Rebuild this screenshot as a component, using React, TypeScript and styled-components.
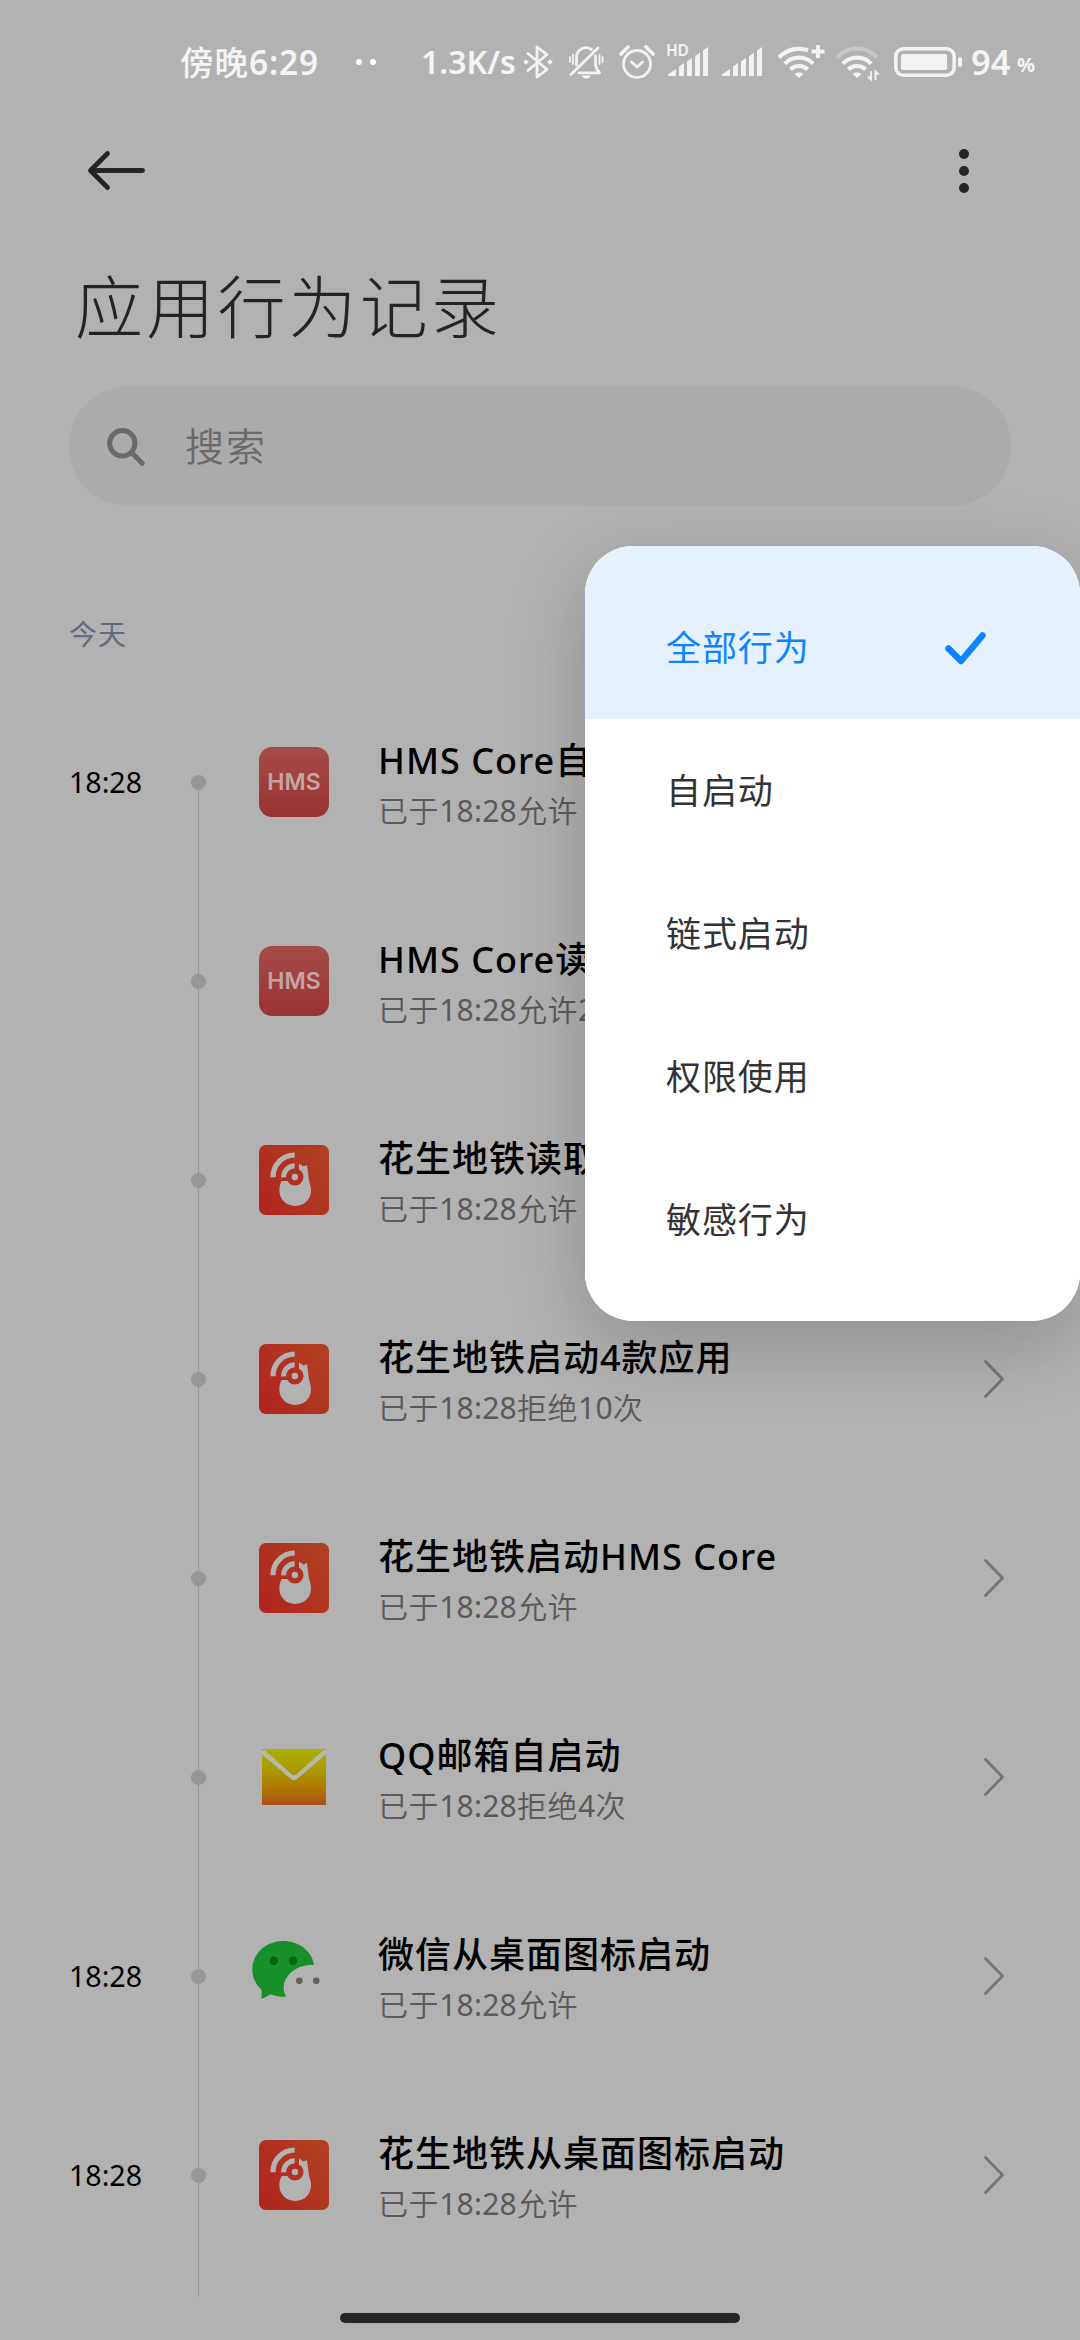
import React from "react";
import styled, { createGlobalStyle } from "styled-components";

const Global = createGlobalStyle`
  *, *::before, *::after { box-sizing: border-box; }
  body {
    margin: 0;
    background: #b2b2b2;
    font-family: "Noto Sans", "Noto Sans CJK SC", sans-serif;
  }
  svg { display: block; flex: none; overflow: visible; }
`;

const Screen = styled.main`
  position: relative;
  width: 1080px;
  height: 2340px;
  overflow: hidden;
  background: #b2b2b2;
  display: flex;
  flex-direction: column;
`;

const StatusBar = styled.div`
  height: 100px;
  padding: 24px 0 0 180px;
  display: flex;
  align-items: center;
  flex: none;
  color: #f4f4f4;
`;

const StatusText = styled.span<{ $w: number; $size: number; $gap?: number; $track?: number; $drop?: number; $weight?: number }>`
  width: ${(p) => p.$w}px;
  margin-right: ${(p) => p.$gap ?? 0}px;
  padding-top: ${(p) => p.$drop ?? 0}px;
  font-size: ${(p) => p.$size}px;
  line-height: 40px;
  letter-spacing: ${(p) => p.$track ?? 0}px;
  font-weight: ${(p) => p.$weight ?? 600};
  white-space: nowrap;
`;

const Digits = styled.span<{ $weight: number; $track: number }>`
  font-weight: ${(p) => p.$weight};
  letter-spacing: ${(p) => p.$track}px;
`;

const NoticeDots = styled.div`
  display: flex;
  gap: 8px;
  width: 67px;
  margin-right: -2px;
  &::before, &::after {
    content: "";
    width: 6px;
    height: 6px;
    border-radius: 50%;
    background: #fff;
  }
`;

const Toolbar = styled.header`
  height: 141px;
  padding: 0 111px 0 88px;
  display: flex;
  align-items: center;
  justify-content: space-between;
  flex: none;
`;

const PlainButton = styled.button`
  border: 0;
  padding: 0;
  background: none;
  color: #242424;
`;

const PageTitle = styled.h1`
  margin: 0;
  height: 145px;
  padding: 16px 0 0 75px;
  font-size: 68px;
  line-height: 100px;
  letter-spacing: 3.2px;
  font-weight: 300;
  color: #242424;
  flex: none;
`;

const SearchBox = styled.div`
  height: 120px;
  margin: 0 69px;
  padding: 1px 38px 0;
  border-radius: 60px;
  background: #ababab;
  display: flex;
  align-items: center;
  gap: 40px;
  flex: none;
  color: #6a6a6a;
`;

const SearchHint = styled.span`
  padding-bottom: 5px;
  font-size: 39px;
  letter-spacing: 2px;
  font-weight: 350;
`;

const DayLabel = styled.h2`
  margin: 0;
  height: 177px;
  padding: 108px 0 0 69px;
  font-size: 28px;
  line-height: 40px;
  letter-spacing: 1px;
  font-weight: 400;
  color: #646b80;
  flex: none;
`;

const List = styled.ul`
  list-style: none;
  margin: 0;
  padding: 0;
  flex: none;
`;

const Row = styled.li`
  height: 199px;
  padding: 0 76px 1px 69px;
  display: flex;
  align-items: center;
`;

const Time = styled.time`
  width: 122px;
  font-size: 28.6px;
  line-height: 40px;
  color: #000;
`;

const Rail = styled.div`
  align-self: flex-start;
  width: 15px;
  height: 199px;
  margin-right: 53px;
  display: flex;
  flex-direction: column;
  align-items: center;
  flex: none;
`;

const RailLine = styled.i<{ $hidden?: boolean }>`
  width: 1px;
  flex: 1;
  background: ${(p) => (p.$hidden ? "transparent" : "#979797")};
`;

const RailDot = styled.i`
  width: 15px;
  height: 15px;
  border-radius: 50%;
  background: #979797;
`;

const RailEnd = styled.div`
  width: 1px;
  height: 22px;
  margin-left: 198px;
  background: #979797;
  flex: none;
`;

const Texts = styled.div`
  flex: 1;
  min-width: 0;
  margin-left: 49px;
  padding-top: 8px;
  display: flex;
  flex-direction: column;
  white-space: nowrap;
`;

const RowTitle = styled.div`
  font-size: 36px;
  line-height: 50px;
  letter-spacing: 1px;
  font-weight: 500;
  color: #000;
`;

const RowNote = styled.div`
  font-size: 30px;
  line-height: 50px;
  letter-spacing: 0.6px;
  font-weight: 350;
  color: #5a5a5a;
`;

const HmsTile = styled.div`
  width: 70px;
  height: 70px;
  border-radius: 13px;
  background: linear-gradient(#a64c48, #983332);
  display: flex;
  align-items: center;
  justify-content: center;
  flex: none;
  font-family: Inter, "Noto Sans", sans-serif;
  font-size: 23px;
  font-weight: 600;
  color: #c3a5a4;
`;

const HomeBar = styled.div`
  width: 400px;
  height: 10px;
  margin: 16px auto 0;
  border-radius: 5px;
  background: #242424;
  flex: none;
`;

const Menu = styled.div`
  position: absolute;
  top: 546px;
  right: 0;
  width: 495px;
  padding: 0 0 30px;
  border-radius: 48px;
  overflow: hidden;
  background: #fff;
`;

const MenuShadow = styled.div`
  position: absolute;
  top: 546px;
  right: 0;
  width: 495px;
  height: 775px;
  border-radius: 48px;
  box-shadow: 0 24px 80px rgba(0, 0, 0, 0.2);
`;

const MenuItem = styled.div<{ $active?: boolean }>`
  height: ${(p) => (p.$active ? 173 : 143)}px;
  padding: ${(p) => (p.$active ? 31 : 1)}px 94px 0 81px;
  display: flex;
  align-items: center;
  justify-content: space-between;
  font-size: 35px;
  line-height: 50px;
  letter-spacing: 0.9px;
  font-weight: 400;
  color: ${(p) => (p.$active ? "#0d84ff" : "#333")};
  background: ${(p) => (p.$active ? "#e5f1ff" : "#fff")};
`;

const SubwayIcon = () => (
  <svg width="70" height="70" viewBox="0 0 70 70">
    <defs>
      <linearGradient id="subway" x1="0" y1="0.75" x2="1" y2="0.1">
        <stop offset="0" stopColor="#b0261f" />
        <stop offset="1" stopColor="#b04122" />
      </linearGradient>
    </defs>
    <rect width="70" height="70" rx="7" fill="url(#subway)" />
    <g fill="none" stroke="#b2b2b2" strokeWidth="5.2">
      <path d="M14 32.3A21.8 21.8 0 0 1 35.7 10" />
      <path d="M24.8 32.3A11 11 0 0 1 35.7 20.8" />
    </g>
    <path
      d="M22.6 36C21 39 20.4 42 20.4 45.6C20.4 54.6 27.2 61 36.2 61C45.2 61 52 54.6 52 45.6C52 40 50 38 49.4 31C49 27 48.4 24 48 20L44.600 21.500L40 18.500V36Z"
      fill="#b2b2b2"
    />
    <circle cx="35.900" cy="32" r="8.600" fill="#b03120" />
    <circle cx="35.900" cy="32" r="3.200" fill="#b2b2b2" />
  </svg>
);

const MailIcon = () => (
  <svg width="70" height="70" viewBox="0 0 70 70">
    <defs>
      <linearGradient id="mail" x1="0" y1="0" x2="0" y2="1">
        <stop offset="0" stopColor="#a9b000" />
        <stop offset="0.35" stopColor="#ab9b00" />
        <stop offset="0.7" stopColor="#ae7802" />
        <stop offset="1" stopColor="#b04f14" />
      </linearGradient>
    </defs>
    <rect x="3" y="7" width="64" height="56" fill="url(#mail)" />
    <path d="M3 8.700L3 12.500L32 37Q35 39.300 38 37L67 12.500V8.700L64.500 8L37 32.500Q35 34 33 32.500L5.500 8Z" fill="#b9b8a6" />
  </svg>
);

const WechatIcon = () => (
  <svg width="70" height="70" viewBox="0 0 70 70">
    <path
      d="M2.700 49C-3 44 -6.700 37 -6.700 28.500C-6.700 12.500 7 0 24 0C40 0 53 10 55 24C38 23 24.700 34 24.700 47C24.700 50 25.500 53 27 55.600C21 56.500 16 55 11.500 53.300L3.500 57.700C2.600 58 2.500 57.500 2.500 56.500Z"
      fill="#17902a"
    />
    <circle cx="14.800" cy="19.700" r="4.300" fill="#07640f" />
    <circle cx="34" cy="19.700" r="4.300" fill="#07640f" />
    <circle cx="40.300" cy="39.800" r="3.300" fill="#5f6157" />
    <circle cx="57.200" cy="39.800" r="3.300" fill="#5f6157" />
  </svg>
);

const Chevron = () => (
  <svg width="20" height="38" viewBox="0 0 20 38" fill="none" stroke="#757575" strokeWidth="2.800" strokeLinecap="round" strokeLinejoin="round">
    <path d="M1.500 1.500L18.500 19L1.500 36.500" />
  </svg>
);

const Bars = () => (
  <g fill="#f2f2f2">
    <path d="M0 30V28.500L8 23V30Z" />
    <path d="M11 30V20.500L16 17V30Z" />
    <path d="M19 30V15.500L24 12V30Z" />
    <path d="M27 30V10.500L32 6.500V30Z" />
    <path d="M35 30V4.500L40 1V30Z" />
  </g>
);

const SignalHdText = styled.span`
  position: absolute;
  left: -2px;
  top: -5px;
  font-size: 15.5px;
  line-height: 18px;
  font-weight: 600;
  letter-spacing: -0.3px;
`;

const StatusSlot = styled.div<{ $gap: number }>`
  position: relative;
  margin-right: ${(p) => p.$gap}px;
`;

const WifiLower = () => (
  <>
    <path d="M6.800 17.800A19.500 19.500 0 0 1 35.200 17.800" />
    <path d="M12.300 23.500A12.500 12.500 0 0 1 29.700 23.500" />
    <path d="M21 32L16.500 28A6.500 6.500 0 0 1 25.500 28Z" fill="#f2f2f2" stroke="none" />
  </>
);

type App = "hms" | "subway" | "mail" | "wechat";

const icons: Record<App, React.ReactNode> = {
  hms: <HmsTile>HMS</HmsTile>,
  subway: <SubwayIcon />,
  mail: <MailIcon />,
  wechat: <WechatIcon />,
};

const records: { time?: string; app: App; title: string; note: string }[] = [
  { time: "18:28", app: "hms", title: "HMS Core自启动", note: "已于18:28允许" },
  { app: "hms", title: "HMS Core读取", note: "已于18:28允许2次" },
  { app: "subway", title: "花生地铁读取", note: "已于18:28允许" },
  { app: "subway", title: "花生地铁启动4款应用", note: "已于18:28拒绝10次" },
  { app: "subway", title: "花生地铁启动HMS Core", note: "已于18:28允许" },
  { app: "mail", title: "QQ邮箱自启动", note: "已于18:28拒绝4次" },
  { time: "18:28", app: "wechat", title: "微信从桌面图标启动", note: "已于18:28允许" },
  { time: "18:28", app: "subway", title: "花生地铁从桌面图标启动", note: "已于18:28允许" },
];

const filters = ["全部行为", "自启动", "链式启动", "权限使用", "敏感行为"];

// Splits a note so that its numbers can carry their own weight.
const noteParts = (note: string) =>
  note.split(/([\d:]+)/).map((part, i) =>
    i % 2 ? (
      <Digits key={i} $weight={400} $track={0.2}>
        {part}
      </Digits>
    ) : (
      part
    )
  );

export default function App() {
  return (
    <Screen lang="zh-CN">
      <Global />
      <StatusBar>
        <StatusText $w={142} $size={33.5} $gap={34} $track={1} $weight={500}>
          傍晚<Digits $weight={600} $track={0.8}>6:29</Digits>
        </StatusText>
        <NoticeDots />
        <StatusText $w={92} $size={32} $gap={10}>1.3K/s</StatusText>
        <StatusSlot $gap={16}>
          <svg width="30" height="34" viewBox="0 0 30 34" fill="none" stroke="#f2f2f2" strokeWidth="2.800" strokeLinejoin="round" strokeLinecap="round">
            <path d="M5 8.500L24 24.500L14 32V2L24 9.500L5 25.500" />
            <path d="M3 14.200L5.800 17L3 19.800L0.200 17ZM27 14.200L29.800 17L27 19.800L24.200 17Z" fill="#f2f2f2" stroke="none" />
          </svg>
        </StatusSlot>
        <StatusSlot $gap={16}>
          <svg width="34" height="34" viewBox="0 0 34 34" fill="none" stroke="#f2f2f2" strokeWidth="2.800" strokeLinecap="round" strokeLinejoin="round">
            <path d="M2 29.500L29 3" />
            <path d="M7.500 20V12A9.500 9.500 0 0 1 22.500 4.500" />
            <path d="M26.500 11V20Q27 24 30.500 27.800H10" />
            <path d="M12.500 30.500H22Q20.500 33.500 17.200 33.500Q14 33.500 12.500 30.500Z" fill="#f2f2f2" stroke="none" />
            <path d="M1 12V17M4 10V19M30.500 10V19M33.500 12V17" strokeWidth="1.800" />
          </svg>
        </StatusSlot>
        <StatusSlot $gap={13}>
          <svg width="36" height="36" viewBox="0 0 36 36" fill="none" stroke="#f2f2f2" strokeWidth="2.800" strokeLinecap="round" strokeLinejoin="round">
            <circle cx="18" cy="20" r="13.500" />
            <path d="M12.500 18L18 23L23.500 18" />
            <path d="M2 10L9 3M34 10L27 3" strokeWidth="3.800" />
          </svg>
        </StatusSlot>
        <StatusSlot $gap={14}>
          <SignalHdText>HD</SignalHdText>
          <svg width="40" height="32" viewBox="0 0 40 32"><Bars /></svg>
        </StatusSlot>
        <StatusSlot $gap={16}>
          <svg width="40" height="32" viewBox="0 0 40 32"><Bars /></svg>
        </StatusSlot>
        <StatusSlot $gap={15}>
          <svg width="43" height="32" viewBox="0 0 43 32" fill="none" stroke="#f2f2f2" strokeWidth="4.200">
            <path d="M1 11.500A28 28 0 0 1 30 4.200" />
            <WifiLower />
            <path d="M40 -1V12M33.500 5.500H46.500" strokeWidth="4" />
          </svg>
        </StatusSlot>
        <StatusSlot $gap={15}>
          <svg width="43" height="32" viewBox="0 0 43 32" fill="none" stroke="#f2f2f2" strokeWidth="4.200">
            <path d="M1 11.500A27 27 0 0 1 41 11.500" stroke="#c6c6c6" />
            <WifiLower />
            <path d="M35 25V33.500L32 30.500M39.500 34V25.500L42.500 28.500" strokeWidth="1.900" />
          </svg>
        </StatusSlot>
        <StatusSlot $gap={9}>
          <svg width="68" height="30" viewBox="0 0 68 30">
            <rect x="1.800" y="1.800" width="58.400" height="26.400" rx="7.500" fill="none" stroke="#f2f2f2" strokeWidth="3.600" />
            <rect x="7" y="7" width="46" height="16" rx="2" fill="#f2f2f2" />
            <rect x="64" y="10" width="4" height="10" rx="2" fill="#f2f2f2" />
          </svg>
        </StatusSlot>
        <StatusText $w={41} $size={34.5} $gap={5}>94</StatusText>
        <StatusText $w={24} $size={20} $drop={6} $weight={700}>%</StatusText>
      </StatusBar>

      <Toolbar>
        <PlainButton aria-label="返回">
          <svg width="57" height="39" viewBox="0 0 57 39" fill="none" stroke="currentColor" strokeWidth="4.800" strokeLinecap="round" strokeLinejoin="round">
            <path d="M19.500 2.500L2.500 19.500L19.500 36.500M3 19.500H54.500" />
          </svg>
        </PlainButton>
        <PlainButton aria-label="更多">
          <svg width="10" height="44" viewBox="0 0 10 44" fill="currentColor">
            <circle cx="5" cy="5" r="5" />
            <circle cx="5" cy="22" r="5" />
            <circle cx="5" cy="39" r="5" />
          </svg>
        </PlainButton>
      </Toolbar>

      <PageTitle>应用行为记录</PageTitle>

      <SearchBox>
        <svg width="38" height="38" viewBox="0 0 38 38" fill="none" stroke="currentColor" strokeWidth="5" strokeLinecap="round">
          <circle cx="15.300" cy="15.300" r="12.700" />
          <path d="M25 25L35.300 35.300" />
        </svg>
        <SearchHint>搜索</SearchHint>
      </SearchBox>

      <DayLabel>今天</DayLabel>

      <List>
        {records.map((r, i) => (
          <Row key={i}>
            <Time>{r.time}</Time>
            <Rail>
              <RailLine $hidden={i === 0} />
              <RailDot />
              <RailLine />
            </Rail>
            {icons[r.app]}
            <Texts>
              <RowTitle>{r.title}</RowTitle>
              <RowNote>{noteParts(r.note)}</RowNote>
            </Texts>
            <Chevron />
          </Row>
        ))}
      </List>
      <RailEnd />
      <HomeBar />

      <MenuShadow />
      <Menu role="menu">
        {filters.map((f, i) => (
          <MenuItem key={f} role="menuitem" $active={i === 0}>
            {f}
            {i === 0 && (
              <svg width="41" height="33" viewBox="0 0 41 33" fill="none" stroke="currentColor" strokeWidth="6.500" strokeLinecap="round" strokeLinejoin="round">
                <path d="M3.500 16.500L16 29L37.500 3.500" />
              </svg>
            )}
          </MenuItem>
        ))}
      </Menu>
    </Screen>
  );
}
